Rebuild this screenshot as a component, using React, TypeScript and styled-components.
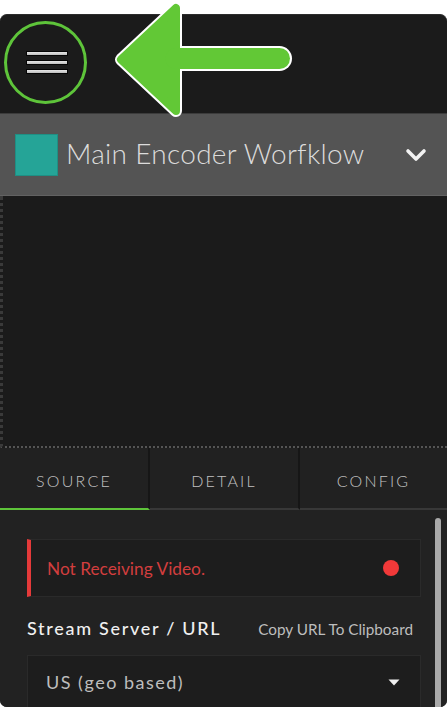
import React from "react";
import styled, { createGlobalStyle } from "styled-components";

const Global = createGlobalStyle`
  html, body { margin: 0; padding: 0; background: #ffffff; }
  body { font-family: Lato, "Open Sans", "Liberation Sans", sans-serif; }
  * { box-sizing: border-box; }
`;

const Stage = styled.div`
  position: relative;
  width: 448px;
  height: 709px;
  padding-top: 14px;
  overflow: hidden;
`;

const Panel = styled.div`
  width: 447px;
  height: 693px;
  background: #1b1b1b;
  border-radius: 7px;
  border-top: 1px solid #2c2c2c;
  overflow: hidden;
  display: flex;
  flex-direction: column;
`;

const TopBar = styled.div`
  height: 98px;
  flex: none;
  display: flex;
  align-items: flex-start;
  padding: 6px 0 0 4px;
`;

const MenuButton = styled.button`
  width: 83px;
  height: 83px;
  border-radius: 50%;
  border: 3px solid #5ec43a;
  background: transparent;
  padding: 0 0 0 3px;
  display: flex;
  flex-direction: column;
  align-items: center;
  justify-content: center;
  gap: 4px;
  cursor: pointer;
`;

const MenuLine = styled.span`
  display: block;
  width: 42px;
  height: 5px;
  background: linear-gradient(#e6e6e6, #bdbdbd);
  border: 1px solid #050505;
`;

const Header = styled.div`
  height: 83px;
  flex: none;
  background: #545454;
  border-top: 1px solid #3c3c3c;
  border-bottom: 1px solid #626262;
  display: flex;
  align-items: center;
  padding: 0 20px 0 15px;
  gap: 8px;
`;

const Swatch = styled.span`
  width: 43px;
  height: 42px;
  flex: none;
  background: #25a497;
  border: 1px solid #1f8f84;
`;

const Title = styled.h1`
  flex: 1;
  margin: 0 0 3px;
  font-family: Lato, "Open Sans", sans-serif;
  font-weight: 300;
  font-size: 28px;
  letter-spacing: 0.3px;
  color: #dcdcdc;
  white-space: nowrap;
`;

const Video = styled.div`
  height: 252px;
  flex: none;
  background: #1b1b1b;
  border-left: 3px dotted #3a3a3a;
  border-bottom: 2px dotted #555555;
`;

const Tabs = styled.div`
  height: 62px;
  flex: none;
  display: grid;
  grid-template-columns: 150px 150px 1fr;
  background: #212121;
`;

const Tab = styled.div<{ $active?: boolean; $last?: boolean }>`
  display: flex;
  align-items: center;
  justify-content: center;
  padding-top: 4px;
  font-size: 16px;
  font-weight: 300;
  letter-spacing: 2.2px;
  color: #c2c2c2;
  border-right: ${(p) => (p.$last ? "none" : "2px solid #161616")};
  border-bottom: 2px solid ${(p) => (p.$active ? "#5ec43a" : "#383838")};
`;

const Content = styled.div`
  position: relative;
  flex: 1;
  background: #222222;
  padding: 29px 26px 0 27px;
  display: flex;
  flex-direction: column;
`;

const Scrollbar = styled.span`
  position: absolute;
  right: 6px;
  top: 8px;
  bottom: 0;
  width: 6px;
  border-radius: 3px;
  background: #a9a9a9;
`;

const Alert = styled.div`
  height: 58px;
  display: flex;
  align-items: center;
  justify-content: space-between;
  background: #1d1d1d;
  border: 1px solid #2a2a2a;
  border-left: 4px solid #e53a3a;
  padding: 0 21px 0 16px;
`;

const AlertText = styled.span`
  font-size: 17.3px;
  color: #d23e3e;
  padding-top: 1px;
`;

const Dot = styled.span`
  width: 16px;
  height: 16px;
  border-radius: 50%;
  background: #f13939;
`;

const LabelRow = styled.div`
  display: flex;
  align-items: baseline;
  justify-content: space-between;
  padding: 20px 8px 0 0;
  height: 58px;
`;

const Label = styled.span`
  font-size: 18px;
  font-weight: 500;
  letter-spacing: 1.7px;
  color: #f0f0f0;
`;

const LinkText = styled.span`
  font-size: 15.3px;
  color: #bdbdbd;
`;

const Select = styled.div`
  height: 58px;
  display: flex;
  align-items: center;
  justify-content: space-between;
  background: #1d1d1d;
  border: 1px solid #2a2a2a;
  border-bottom: none;
  padding: 0 20px 5px 18px;
`;

const SelectText = styled.span`
  font-size: 18px;
  letter-spacing: 1.5px;
  color: #bdbdbd;
`;

const ArrowOverlay = styled.svg`
  position: absolute;
  left: 0;
  top: 0;
  pointer-events: none;
`;

export default function App() {
  return (
    <>
      <Global />
      <Stage>
        <Panel>
          <TopBar>
            <MenuButton aria-label="menu">
              <MenuLine />
              <MenuLine />
              <MenuLine />
            </MenuButton>
          </TopBar>
          <Header>
            <Swatch />
            <Title>Main Encoder Worfklow</Title>
            <svg width="22" height="14" viewBox="0 0 22 14">
              <path d="M3 3 L11 11 L19 3" fill="none" stroke="#f2f2f2" strokeWidth="3.6" strokeLinecap="round" strokeLinejoin="round" />
            </svg>
          </Header>
          <Video />
          <Tabs>
            <Tab $active>SOURCE</Tab>
            <Tab>DETAIL</Tab>
            <Tab $last>CONFIG</Tab>
          </Tabs>
          <Content>
            <Scrollbar />
            <Alert>
              <AlertText>Not Receiving Video.</AlertText>
              <Dot />
            </Alert>
            <LabelRow>
              <Label>Stream Server / URL</Label>
              <LinkText>Copy URL To Clipboard</LinkText>
            </LabelRow>
            <Select>
              <SelectText>US (geo based)</SelectText>
              <svg width="12" height="7" viewBox="0 0 12 7">
                <path d="M0.5 0.5 L11.5 0.5 L6 6.5 Z" fill="#f0f0f0" />
              </svg>
            </Select>
          </Content>
        </Panel>
        <ArrowOverlay width="300" height="122" viewBox="0 0 300 122">
          <g stroke="#ffffff" strokeLinejoin="round" strokeLinecap="round">
            <path d="M121 59.5 L176 8 L176 111 Z" fill="#ffffff" strokeWidth="12" />
            <line x1="176" y1="58.5" x2="279.5" y2="58.5" strokeWidth="25" />
          </g>
          <g stroke="#62c836" strokeLinejoin="round" strokeLinecap="round">
            <path d="M121 59.5 L176 8 L176 111 Z" fill="#62c836" strokeWidth="8" />
            <line x1="176" y1="58.5" x2="279.5" y2="58.5" strokeWidth="21" />
          </g>
        </ArrowOverlay>
      </Stage>
    </>
  );
}
